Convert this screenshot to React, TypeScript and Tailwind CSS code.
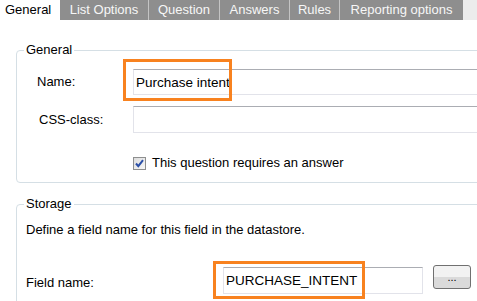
const TABS = [
  { label: "List Options", w: "w-[88px]" },
  { label: "Question", w: "w-[71px]" },
  { label: "Answers", w: "w-[70px]" },
  { label: "Rules", w: "w-[50px]" },
  { label: "Reporting options", w: "w-[124px]" },
];

// Windows-style text box: darker top edge, pale sides/bottom
const inputCls =
  "h-[26px] border border-[#e2e3ea] border-t-[#abadb3] bg-white pl-[2px] text-[13.5px] leading-[24px] text-black outline-none";

const Checkbox = () => (
  <svg width="13" height="13" viewBox="0 0 13 13" className="shrink-0">
    <defs>
      <linearGradient id="cb" x1="0" y1="0" x2="1" y2="1">
        <stop offset="0" stopColor="#dcdcdc" />
        <stop offset="1" stopColor="#f8f8f8" />
      </linearGradient>
    </defs>
    <rect x="0.5" y="0.5" width="12" height="12" fill="url(#cb)" stroke="#8e8f8f" />
    <path d="M3 6.5 L5.3 9.2 L10 3.2" fill="none" stroke="#2b4fa7" strokeWidth="2" />
  </svg>
);

export default function App() {
  return (
    <div className="h-[301px] w-[477px] overflow-hidden bg-white font-['Liberation_Sans',Arial,sans-serif] text-[13px] text-black">
      {/* Tab strip */}
      <div className="flex h-[20px] bg-[#ececec]">
        <div className="flex w-[60px] items-center bg-white pl-[5px] leading-[20px]">General</div>
        {TABS.map((t, i) => (
          <div
            key={t.label}
            className={`flex ${t.w} items-center justify-center bg-[#8e8e8e] leading-[20px] text-[#f7f7f7] ${
              i > 0 ? "border-l border-[#c4c4c4]" : ""
            }`}
          >
            {t.label}
          </div>
        ))}
      </div>

      <div className="pl-[16px] pt-[22px]">
        {/* General group */}
        <fieldset className="mr-[-30px] h-[141px] rounded-[4px] border border-[#d5dfe5] p-0">
          <legend className="ml-[7px] px-[2px] leading-[16px]">General</legend>
          <div className="grid grid-cols-[96px_1fr] items-center gap-y-[11px] pl-[20px] pt-[11px]">
            <span>Name:</span>
            <div className="relative">
              <input className={`${inputCls} w-full`} defaultValue="Purchase intent" readOnly />
              <div className="pointer-events-none absolute left-[-10px] top-[-10px] h-[42px] w-[109px] border-[3px] border-[#f8821f]" />
            </div>
            <span className="pl-[2px]">CSS-class:</span>
            <input className={`${inputCls} h-[27px] w-full`} readOnly />
            <span />
            <label className="mt-[11px] flex items-center gap-[6px]">
              <Checkbox />
              <span className="leading-[16px]">This question requires an answer</span>
            </label>
          </div>
        </fieldset>

        {/* Storage group */}
        <fieldset className="mr-[-30px] mt-[13px] h-[120px] rounded-[4px] border border-[#d5dfe5] p-0">
          <legend className="ml-[7px] px-[2px] leading-[16px]">Storage</legend>
          <div className="pl-[9px]">
            <p className="pt-[10px] leading-[16px]">Define a field name for this field in the datastore.</p>
            <div className="mt-[27px] flex items-center">
              <span className="w-[197px] pt-[5px]">Field name:</span>
              <div className="relative">
                <input
                  className={`${inputCls} h-[27px] w-[200px]`}
                  defaultValue="PURCHASE_INTENT"
                  readOnly
                />
                <div className="pointer-events-none absolute left-[-10px] top-[-6px] h-[38px] w-[152px] border-[3px] border-[#f8821f]" />
              </div>
              <button className="ml-[10px] mb-[6px] h-[24px] w-[38px] rounded-[3px] border border-[#707070] bg-gradient-to-b from-[#f2f2f2] from-50% to-[#dadada] to-50% text-[11px] leading-[20px] text-black">
                ...
              </button>
            </div>
          </div>
        </fieldset>
      </div>
    </div>
  );
}
